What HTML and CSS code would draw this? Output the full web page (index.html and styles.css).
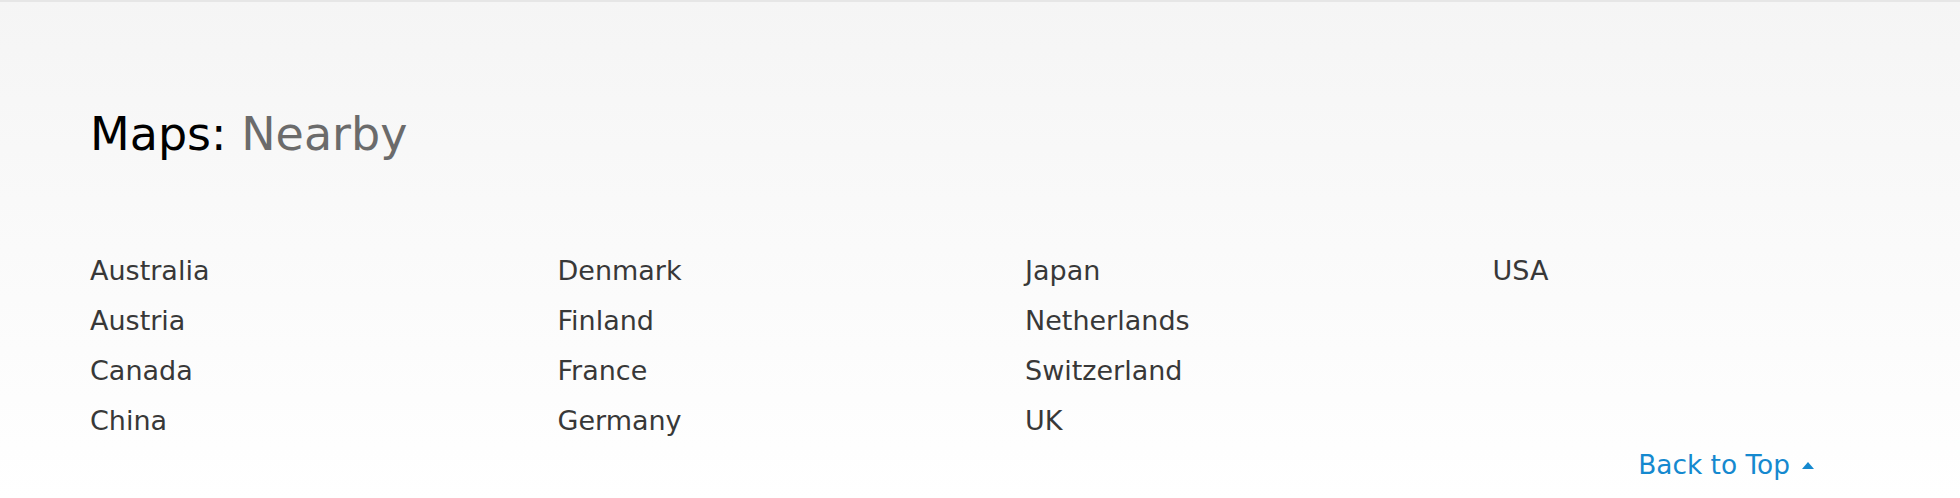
FILE: index.html
```html
<!DOCTYPE html>
<html lang="en">
<head>
<meta charset="utf-8">
<title>Maps: Nearby</title>
<link rel="stylesheet" href="styles.css">
</head>
<body>
<section class="nearby">
  <h1 class="title"><span class="title-main">Maps:</span> <span class="title-sub">Nearby</span></h1>
  <ul class="countries">
    <li><a href="#">Australia</a></li>
    <li><a href="#">Austria</a></li>
    <li><a href="#">Canada</a></li>
    <li><a href="#">China</a></li>
    <li><a href="#">Denmark</a></li>
    <li><a href="#">Finland</a></li>
    <li><a href="#">France</a></li>
    <li><a href="#">Germany</a></li>
    <li><a href="#">Japan</a></li>
    <li><a href="#">Netherlands</a></li>
    <li><a href="#">Switzerland</a></li>
    <li><a href="#">UK</a></li>
    <li><a href="#">USA</a></li>
  </ul>
  <div class="back-row">
    <a class="back-top" href="#">Back to Top<span class="arrow"></span></a>
  </div>
</section>
</body>
</html>
```
FILE: styles.css
```css
html, body {
  margin: 0;
  padding: 0;
}
body {
  width: 1960px;
  height: 498px;
  box-sizing: border-box;
  border-top: 2px solid #e6e6e6;
  background: linear-gradient(to bottom, #f5f5f5 0%, #ffffff 100%);
  font-family: "DejaVu Sans", "Liberation Sans", sans-serif;
  overflow: hidden;
}
.nearby {
  padding: 105px 146px 0 90px;
}
.title {
  margin: 0;
  font-size: 46px;
  line-height: 54px;
  font-weight: normal;
}
.title-main {
  color: #000;
}
.title-sub {
  color: #6b6b6b;
}
.countries {
  list-style: none;
  margin: 85px 0 0;
  padding: 0;
  display: grid;
  grid-template-columns: repeat(4, 377.5px);
  grid-template-rows: repeat(4, 50px);
  grid-auto-flow: column;
  column-gap: 90px;
}
.countries li {
  font-size: 27px;
  line-height: 50px;
}
.countries a {
  color: #383838;
  text-decoration: none;
}
.back-row {
  display: flex;
  justify-content: flex-end;
  margin-top: 1px;
}
.back-top {
  display: flex;
  align-items: center;
  font-size: 26.4px;
  line-height: 36px;
  color: #1589cf;
  text-decoration: none;
}
.arrow {
  width: 0;
  height: 0;
  margin-left: 12px;
  border-left: 6.5px solid transparent;
  border-right: 6.5px solid transparent;
  border-bottom: 7px solid #1589cf;
}
```
